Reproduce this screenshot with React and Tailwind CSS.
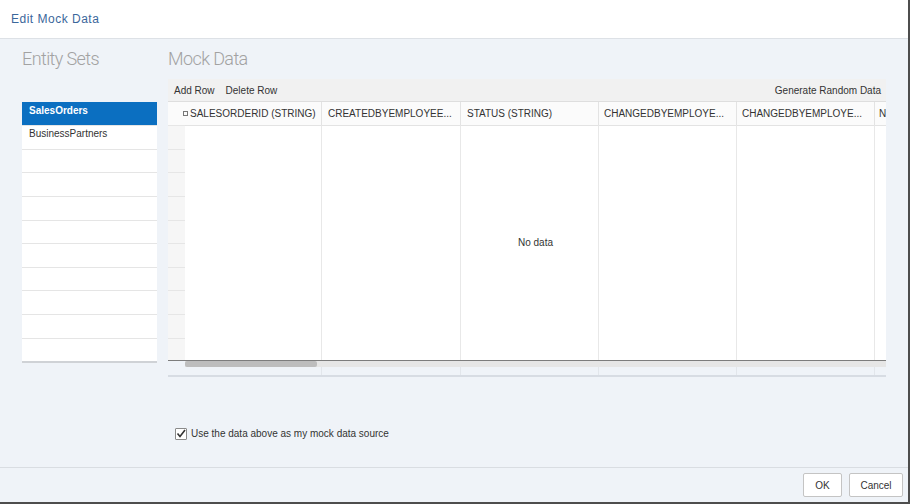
const ROW_HEIGHTS = [24, 23, 24, 24, 23, 24, 23, 24, 24, 22];

const COLUMNS = [
  { label: "SALESORDERID (STRING)", width: "w-[154px]", pad: "pl-[15px]", check: true },
  { label: "CREATEDBYEMPLOYEE...", width: "w-[139px]", pad: "pl-[6px]" },
  { label: "STATUS (STRING)", width: "w-[138px]", pad: "pl-[6px]" },
  { label: "CHANGEDBYEMPLOYE...", width: "w-[138px]", pad: "pl-[5px]" },
  { label: "CHANGEDBYEMPLOYE...", width: "w-[138px]", pad: "pl-[5px]" },
  { label: "N", width: "w-[11px]", pad: "pl-[4px]" },
];

// body columns: the first one loses the 17px gutter
const BODY_WIDTHS = ["w-[137px]", "w-[139px]", "w-[138px]", "w-[138px]", "w-[138px]", "w-[138px]"];

const ENTITY_SETS = ["SalesOrders", "BusinessPartners", "", "", "", "", "", "", "", "", ""];
const LIST_HEIGHTS = [23, 24, 23, 24, 24, 23, 24, 23, 24, 24, 23];

export default function App() {
  return (
    <div
      className="w-[910px] h-[504px] flex flex-col bg-[#eff3f8] border-r-2 border-b-2 border-[#4d4d4d] overflow-hidden text-[10px] text-[#333]"
      style={{ fontFamily: '"Liberation Sans", Arial, sans-serif' }}
    >
      {/* Title bar */}
      <div className="h-[39px] shrink-0 bg-white border-b border-[#dde1e6] flex items-center pl-[11px]">
        <span className="text-[12px] tracking-[0.5px] text-[#3b679b]">Edit Mock Data</span>
      </div>

      <div className="flex-1 flex pl-[22px]">
        {/* Entity sets */}
        <div className="w-[135px] shrink-0 flex flex-col">
          <div className="h-[40px] pt-[9px] text-[18px] leading-[21px] tracking-[-0.6px] text-[#a2a2a2] font-light font-[Roboto,sans-serif]">Entity Sets</div>
          <div className="h-[23px]" />
          <div className="flex flex-col bg-white border-b-2 border-[#cfd2d6]">
            {ENTITY_SETS.map((name, i) => (
              <div
                key={i}
                style={{ height: LIST_HEIGHTS[i] }}
                className={
                  i === 0
                    ? "flex items-start pt-[3px] leading-[12px] pl-[7px] bg-[#0b6fc1] text-white font-bold"
                    : "flex items-start pt-[2px] leading-[12px] pl-[7px] border-t border-[#e5e5e5]"
                }
              >
                {name}
              </div>
            ))}
          </div>
        </div>

        {/* Mock data */}
        <div className="ml-[11px] w-[718px] shrink-0 flex flex-col">
          <div className="h-[40px] pt-[9px] text-[18px] leading-[21px] tracking-[-0.6px] text-[#a2a2a2] font-light font-[Roboto,sans-serif]">Mock Data</div>

          <div className="h-[23px] bg-[#f1f1f1] border-b border-[#dedede] flex items-center pl-[6px] pr-[5px] gap-[11px]">
            <span>Add Row</span>
            <span>Delete Row</span>
            <span className="ml-auto">Generate Random Data</span>
          </div>

          <div className="overflow-hidden">
            {/* header */}
            <div className="flex h-[23px] bg-[#fbfbfb] w-max">
              {COLUMNS.map((c, i) => (
                <div key={i} className={`${c.width} shrink-0 flex items-center ${c.pad} ${i < 5 ? "border-r border-[#e3e3e3]" : ""} whitespace-nowrap overflow-hidden`}>
                  {c.check && <span className="w-[5px] h-[5px] border border-[#777] mr-[2px] shrink-0" />}
                  {c.label}
                </div>
              ))}
            </div>

            {/* body */}
            <div className="relative flex w-max h-[236px] border-b border-[#7d7d7d]">
              <div className="w-[17px] shrink-0 bg-[#f6f6f6] flex flex-col">
                {ROW_HEIGHTS.map((h, i) => (
                  <div key={i} style={{ height: h }} className="border-t border-[#e6e6e6]" />
                ))}
              </div>
              {BODY_WIDTHS.map((w, i) => (
                <div key={i} className={`${w} shrink-0 bg-white border-r border-[#e8e8e8] border-t border-t-[#e3e3e3]`} />
              ))}
              <div className="absolute left-[17px] w-[701px] top-0 bottom-0 flex items-center justify-center">
                No data
              </div>
            </div>

            {/* scrollbar */}
            <div className="flex h-[6px]">
              <div className="w-[17px] shrink-0" />
              <div className="flex-1 bg-[#e6e6e6]">
                <div className="w-[132px] h-full bg-[#bdbdbd] rounded-[2px]" />
              </div>
            </div>

            {/* footer row */}
            <div className="flex w-max h-[10px] border-b-2 border-[#d7dce3]">
              <div className="w-[17px] shrink-0" />
              {BODY_WIDTHS.map((w, i) => (
                <div key={i} className={`${w} shrink-0 border-r border-[#e2e6eb]`} />
              ))}
            </div>
          </div>

          <div className="flex-1" />

          <label className="flex items-center gap-[4px] pl-[7px] mb-[26px]">
            <span className="w-[12px] h-[12px] border border-[#8a8a8a] bg-white rounded-[1px] flex items-center justify-center">
              <svg width="10" height="9" viewBox="0 0 10 9">
                <path d="M1.5 4.5 L4 7.5 L9 1" fill="none" stroke="#333" strokeWidth="1.6" />
              </svg>
            </span>
            <span>Use the data above as my mock data source</span>
          </label>
        </div>
      </div>

      {/* Footer */}
      <div className="h-[35px] shrink-0 border-t border-[#d9dde2] flex items-center justify-end gap-[7px] pr-[5px]">
        <button className="w-[39px] h-[24px] bg-white border border-[#c4c4c4] rounded-[2px] text-[10px] text-[#333]">OK</button>
        <button className="w-[54px] h-[24px] bg-white border border-[#c4c4c4] rounded-[2px] text-[10px] text-[#333]">Cancel</button>
      </div>
    </div>
  );
}
